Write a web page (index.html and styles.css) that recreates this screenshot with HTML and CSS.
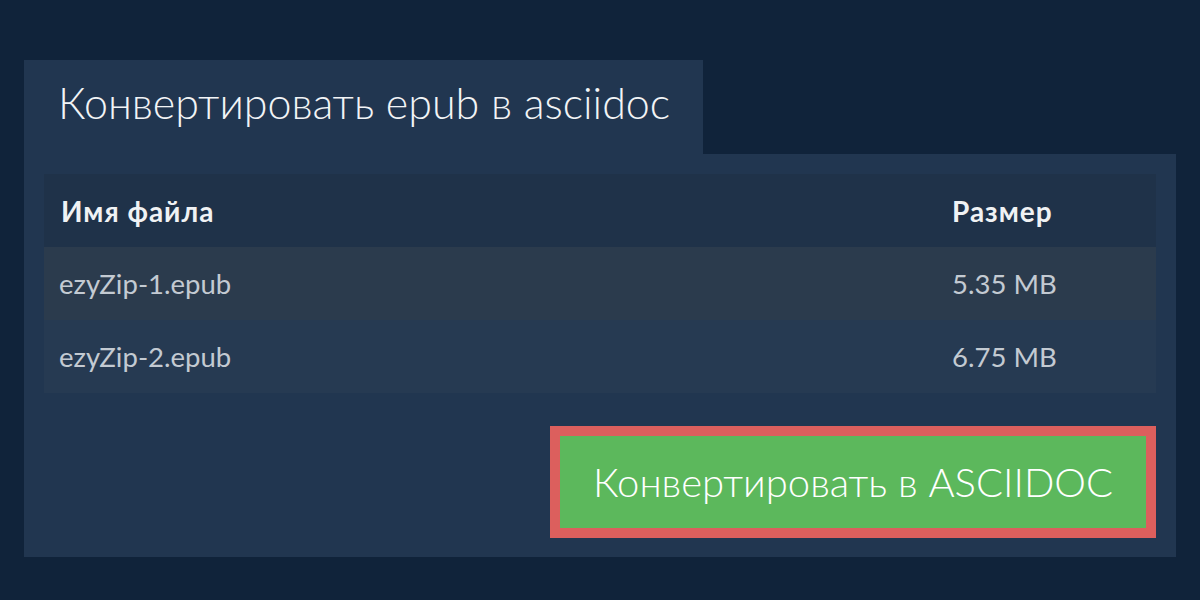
FILE: index.html
```html
<!DOCTYPE html>
<html lang="ru">
<head>
<meta charset="utf-8">
<title>Конвертировать epub в asciidoc</title>
<link rel="stylesheet" href="styles.css">
</head>
<body>
<main class="page">
  <div class="tab"><h1 class="title">Конвертировать epub в asciidoc</h1></div>
  <section class="panel">
    <table class="files">
      <thead>
        <tr><th class="name">Имя файла</th><th class="size">Размер</th></tr>
      </thead>
      <tbody>
        <tr class="odd"><td class="name">ezyZip-1.epub</td><td class="size">5.35 MB</td></tr>
        <tr class="even"><td class="name">ezyZip-2.epub</td><td class="size">6.75 MB</td></tr>
      </tbody>
    </table>
    <div class="actions">
      <button class="convert">Конвертировать в ASCIIDOC</button>
    </div>
  </section>
</main>
</body>
</html>
```

FILE: styles.css
```css
html, body {
  margin: 0;
  padding: 0;
}
body {
  background: #10233a;
  font-family: Lato, "Noto Sans", sans-serif;
  width: 1200px;
  height: 600px;
  overflow: hidden;
}
.page {
  padding: 60px 24px 0 24px;
}
.tab {
  display: inline-block;
  width: 679px;
  height: 94px;
  background: #213650;
  box-sizing: border-box;
  padding-left: 34px;
}
.title {
  margin: 0;
  font-weight: 300;
  font-size: 43px;
  line-height: 86px;
  color: #f2f4f6;
}
.panel {
  background: #213650;
  padding: 20px 20px 19px 20px;
}
.files {
  width: 100%;
  border-collapse: collapse;
}
.files th, .files td {
  text-align: left;
  padding: 0 17px;
  height: 73px;
  box-sizing: border-box;
}
.files td.name {
  padding-left: 15px;
}
.files th {
  font-weight: 700;
  font-size: 28px;
  letter-spacing: 1px;
  color: #f0f2f4;
  background: #1f3249;
}
.files td {
  font-size: 27.5px;
  color: #c3cad2;
}
.files .size {
  width: 204px;
  padding-left: 0;
}
.odd td { background: #2b3b4d; }
.even td { background: #263a52; }
.actions {
  display: flex;
  justify-content: flex-end;
  padding-top: 33px;
}
.convert {
  background: #5cb85c;
  border: 10px solid #dc5f5d;
  width: 606px;
  height: 112px;
  font-family: Lato, "Noto Sans", sans-serif;
  font-weight: 300;
  font-size: 40px;
  color: #ffffff;
  padding: 0;
  margin: 0;
}
```
